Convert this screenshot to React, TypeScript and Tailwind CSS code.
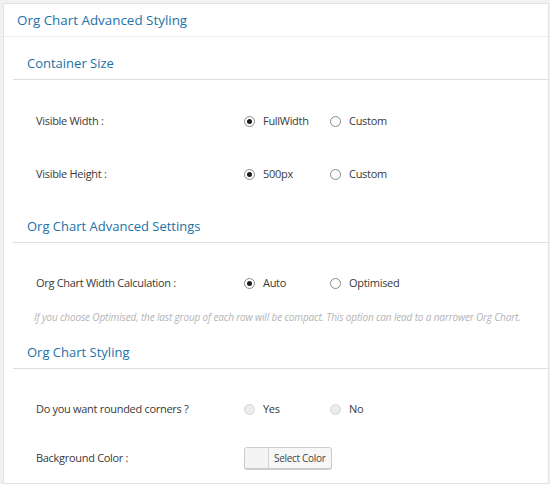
import React from "react";

const font = { fontFamily: '"Open Sans", "Noto Sans", Arial, sans-serif' };

function Radio({ checked, disabled, label }: { checked?: boolean; disabled?: boolean; label: string }) {
  return (
    <div className="flex items-center gap-[8px]">
      <span
        className={
          "flex h-[11px] w-[11px] items-center justify-center rounded-full border " +
          (disabled ? "border-[#d6d6d6] bg-[#ececec]" : "border-[#8a8a8a] bg-white")
        }
      >
        {checked ? <span className="h-[5px] w-[5px] rounded-full bg-[#1e1e1e]" /> : null}
      </span>
      <span className="text-[11px] tracking-[-0.3px] text-[#3a3a3a]">{label}</span>
    </div>
  );
}

function SectionHeader({ title, top }: { title: string; top: string }) {
  return (
    <div className={"ml-[9px] border-b border-[#dedede] pb-[6px] pl-[14px] " + top}>
      <div className="h-[20px] text-[13px] leading-[20px] text-[#2271a8]">{title}</div>
    </div>
  );
}

function Row({ label, children, top }: { label: string; children: React.ReactNode; top: string }) {
  return (
    <div className={"flex h-[20px] items-center pl-[32px] " + top}>
      <div className="w-[208px] text-[11px] tracking-[-0.3px] text-[#3a3a3a]">{label}</div>
      {children}
    </div>
  );
}

function RadioPair({ a, b }: { a: React.ReactNode; b: React.ReactNode }) {
  return (
    <div className="flex items-center">
      <div className="w-[86px]">{a}</div>
      <div>{b}</div>
    </div>
  );
}

export default function App() {
  return (
    <div className="h-[484px] w-[550px] overflow-hidden bg-[#f1f1f1] pl-[3px] pt-[3px]" style={font}>
      <div className="h-[481px] w-[546px] border border-[#e3e3e3] bg-white">
        <div className="flex h-[33px] items-center border-b border-[#ececec] pl-[13px]">
          <span className="text-[13.4px] text-[#2271a8]">Org Chart Advanced Styling</span>
        </div>

        <SectionHeader title="Container Size" top="pt-[16px]" />
        <Row label="Visible Width :" top="mt-[31px]">
          <RadioPair a={<Radio checked label="FullWidth" />} b={<Radio label="Custom" />} />
        </Row>
        <Row label="Visible Height :" top="mt-[33px]">
          <RadioPair a={<Radio checked label="500px" />} b={<Radio label="Custom" />} />
        </Row>

        <SectionHeader title="Org Chart Advanced Settings" top="pt-[32px]" />
        <Row label="Org Chart Width Calculation :" top="mt-[30px]">
          <RadioPair a={<Radio checked label="Auto" />} b={<Radio label="Optimised" />} />
        </Row>
        <div className="mt-[16px] h-[16px] whitespace-nowrap pl-[30px] text-[10px] italic leading-[16px] tracking-[-0.15px] text-[#b4b4b4]">
          If you choose Optimised, the last group of each row will be compact. This option can lead to a narrower Org Chart.
        </div>

        <SectionHeader title="Org Chart Styling" top="pt-[17px]" />
        <Row label="Do you want rounded corners ?" top="mt-[30px]">
          <RadioPair a={<Radio disabled label="Yes" />} b={<Radio disabled label="No" />} />
        </Row>
        <Row label="Background Color :" top="mt-[29px]">
          <div className="flex h-[22px] overflow-hidden rounded-[3px] border border-[#cccccc] bg-[#f7f7f7] shadow-[0_1px_0_#cccccc]">
            <div className="w-[24px] border-r border-[#d4d4d4] bg-[#f4f4f4]" />
            <div className="flex items-center px-[5px] text-[10px] tracking-[-0.3px] text-[#444]">Select Color</div>
          </div>
        </Row>
      </div>
    </div>
  );
}
